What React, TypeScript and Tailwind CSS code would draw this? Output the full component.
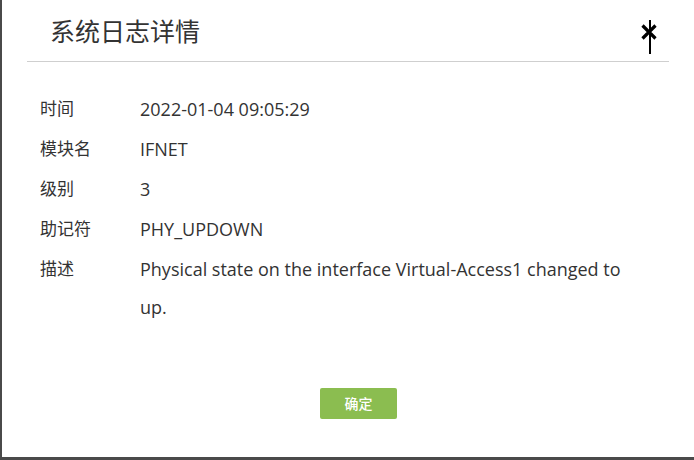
interface LogField {
  label: string;
  value: string;
}

const fields: LogField[] = [
  { label: '时间', value: '2022-01-04 09:05:29' },
  { label: '模块名', value: 'IFNET' },
  { label: '级别', value: '3' },
  { label: '助记符', value: 'PHY_UPDOWN' },
  { label: '描述', value: 'Physical state on the interface Virtual-Access1 changed to up.' },
];

const font = { fontFamily: '"Open Sans", "Noto Sans CJK SC", sans-serif' };

/**
 * Detail dialog for a single system log entry.
 */
export default function App() {
  return (
    <div className="w-[694px] h-[460px] overflow-hidden bg-[#4a4a4a] pl-[2px]" style={font}>
      <div className="w-[692px] h-[457px] bg-white flex flex-col text-[#333]">
        <div className="mx-[25px] h-[62px] border-b border-[#cfcfcf] flex items-center justify-between">
          <h1 className="pl-[23px] text-[25px] leading-none text-[#333] pt-[2px]">系统日志详情</h1>
          {/* close button, with the mouse cursor over it */}
          <div className="relative w-[18px] h-[18px] mr-[11px] mt-[2px]">
            <svg viewBox="0 0 18 18" className="w-[18px] h-[18px]">
              <path d="M2.5 2.5L15.5 15.5M15.5 2.5L2.5 15.5" stroke="#000" strokeWidth="3.2" />
            </svg>
            <div className="absolute left-[9px] top-[-3px] w-[1.5px] h-[34px] bg-black" />
          </div>
        </div>

        <div className="pl-[38px] pt-[27px] flex flex-col">
          {fields.map((f) => (
            <div key={f.label} className="flex leading-[40px]">
              <div className="w-[100px] shrink-0 text-[17px]">{f.label}</div>
              <div className="w-[500px] text-[18px] leading-[38px] pt-[1px]">{f.value}</div>
            </div>
          ))}
        </div>

        <div className="mt-auto mb-[38px] pl-[318px]">
          <button className="w-[77px] h-[31px] rounded-[2px] bg-[#8bbd50] text-white text-[14px] font-medium">
            确定
          </button>
        </div>
      </div>
    </div>
  );
}
